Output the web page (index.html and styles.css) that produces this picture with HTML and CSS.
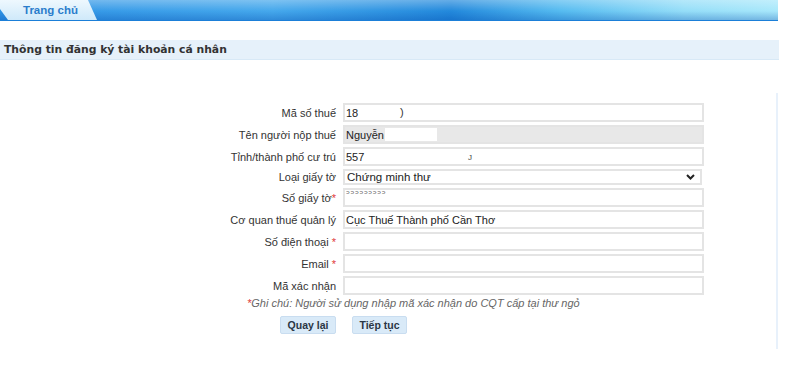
FILE: index.html
```html
<!DOCTYPE html>
<html lang="vi">
<head>
    <meta charset="UTF-8">
    <meta name="viewport" content="width=device-width, initial-scale=1.0">
    <title>Thông tin đăng ký tài khoản cá nhân</title>
    <link rel="stylesheet" href="styles.css">
</head>
<body>
    <div class="topbar">
        <div class="tab">Trang chủ</div>
    </div>

    <div class="title-bar">Thông tin đăng ký tài khoản cá nhân</div>

    <div class="panel">
        <div class="form">
            <label>Mã số thuế</label>
            <div class="field">
                <input type="text" value="18">
                <span class="mark paren">)</span>
            </div>

            <label>Tên người nộp thuế</label>
            <div class="field">
                <input type="text" class="readonly" value="Nguyễn" readonly>
                <span class="mark hide"></span>
            </div>

            <label>Tỉnh/thành phố cư trú</label>
            <div class="field">
                <input type="text" value="557">
                <span class="mark tail">J</span>
            </div>

            <label>Loại giấy tờ</label>
            <div class="field select-wrap">
                <select>
                    <option>Chứng minh thư</option>
                    <option>Hộ chiếu</option>
                </select>
                <svg class="chevron" width="9" height="6" viewBox="0 0 9 6">
                    <path d="M1 1 L4.5 4.5 L8 1" fill="none" stroke="#222" stroke-width="2"/>
                </svg>
            </div>

            <label>Số giấy tờ<span class="req">*</span></label>
            <div class="field">
                <input type="text" value="">
                <span class="mark digits">ᵓᵓᵓᵓᵓᵓᵓᵓᵓ</span>
            </div>

            <label>Cơ quan thuế quản lý</label>
            <div class="field">
                <input type="text" value="Cục Thuế Thành phố Cần Thơ">
            </div>

            <label>Số điện thoại <span class="req">*</span></label>
            <div class="field">
                <input type="text">
            </div>

            <label>Email <span class="req">*</span></label>
            <div class="field">
                <input type="text">
            </div>

            <label>Mã xác nhận</label>
            <div class="field">
                <input type="text">
            </div>
        </div>

        <div class="note"><span class="req">*</span>Ghi chú: Người sử dụng nhập mã xác nhận do CQT cấp tại thư ngỏ</div>

        <div class="actions">
            <button class="btn btn-back">Quay lại</button>
            <button class="btn btn-next">Tiếp tục</button>
        </div>
    </div>
</body>
</html>
```

FILE: styles.css
```css
body {
    margin: 0;
    padding: 0;
    background: #fff;
    color: #333;
    font-family: 'Liberation Sans', Arial, sans-serif;
    font-size: 11px;
}
.topbar {
    width: 778px;
    height: 21px;
    background:
        linear-gradient(to bottom, rgba(255, 255, 255, 0.3), rgba(255, 255, 255, 0) 55%, rgba(0, 70, 170, 0.3)),
        linear-gradient(to right, #2f93e5, #45a8ec 35%, #2389dc 58%, #55bbf0 72%, #95def8 88%, #a8e8fb);
    border-bottom: 1px solid #1b7fd8;
    box-sizing: border-box;
}
.tab {
    width: 97px;
    height: 20px;
    line-height: 21px;
    padding-left: 23px;
    box-sizing: border-box;
    background: linear-gradient(to bottom, #eef8fe, #cfe9fa);
    clip-path: polygon(0 0, 88px 0, 97px 100%, 8px 100%, 0 9px);
    color: #2b7dcc;
    font-weight: bold;
    font-size: 11.5px;
}
.title-bar {
    margin-top: 19px;
    width: 779px;
    height: 20px;
    line-height: 20px;
    padding-left: 4px;
    box-sizing: border-box;
    background: #e6f1fa;
    border-bottom: 1px solid #d8e9f6;
    font-family: 'DejaVu Sans', Verdana, sans-serif;
    font-weight: bold;
    font-size: 10.8px;
    color: #333;
}
.panel {
    margin-top: 33px;
    width: 778px;
    box-sizing: border-box;
    border-right: 2px solid #e8f1fb;
    padding: 10px 0 15px 0;
}
.form {
    display: grid;
    grid-template-columns: 336px 361px;
    column-gap: 7px;
    row-gap: 3px;
}
.form label {
    align-self: center;
    text-align: right;
    color: #333;
    white-space: nowrap;
}
.req {
    color: #e03a3a;
}
.field {
    position: relative;
}
.field input,
.field select {
    display: block;
    width: 100%;
    height: 19px;
    box-sizing: border-box;
    border: 2px solid #e4e4e4;
    padding: 0 1px;
    font-family: 'Liberation Sans', Arial, sans-serif;
    font-size: 11px;
    color: #222;
    background: #fff;
    outline: none;
}
.field input.readonly {
    background: #e8e8e8;
}
.select-wrap select {
    width: calc(100% - 2px);
    height: 16px;
    padding: 0 2px;
    appearance: none;
    -webkit-appearance: none;
    border-radius: 0;
    font-size: 11.5px;
}
.chevron {
    position: absolute;
    right: 9px;
    top: 5px;
}
.mark {
    position: absolute;
}
.mark.paren {
    left: 57px;
    top: 3px;
    line-height: 13px;
    color: #333;
}
.mark.hide {
    left: 42px;
    top: 3px;
    width: 52px;
    height: 13px;
    background: #fff;
}
.mark.tail {
    left: 125px;
    top: 6px;
    font-size: 8px;
    line-height: 9px;
    color: #444;
}
.mark.digits {
    left: 3px;
    top: 2px;
    line-height: 10px;
    font-family: 'DejaVu Sans', sans-serif;
    font-size: 11px;
    letter-spacing: 0.4px;
    color: #555;
}
.note {
    margin-top: 1px;
    padding-left: 247px;
    line-height: 14px;
    font-style: italic;
    color: #666;
}
.actions {
    display: flex;
    gap: 16px;
    margin-top: 6px;
    padding-left: 280px;
}
.btn {
    height: 18px;
    padding: 0;
    background: #d9eaf8;
    border: 1px solid #c9ddf0;
    border-radius: 2px;
    font-family: 'Liberation Sans', Arial, sans-serif;
    font-weight: bold;
    font-size: 10.5px;
    color: #2a3644;
    cursor: pointer;
}
.btn-back {
    width: 56px;
}
.btn-next {
    width: 55px;
}
```
